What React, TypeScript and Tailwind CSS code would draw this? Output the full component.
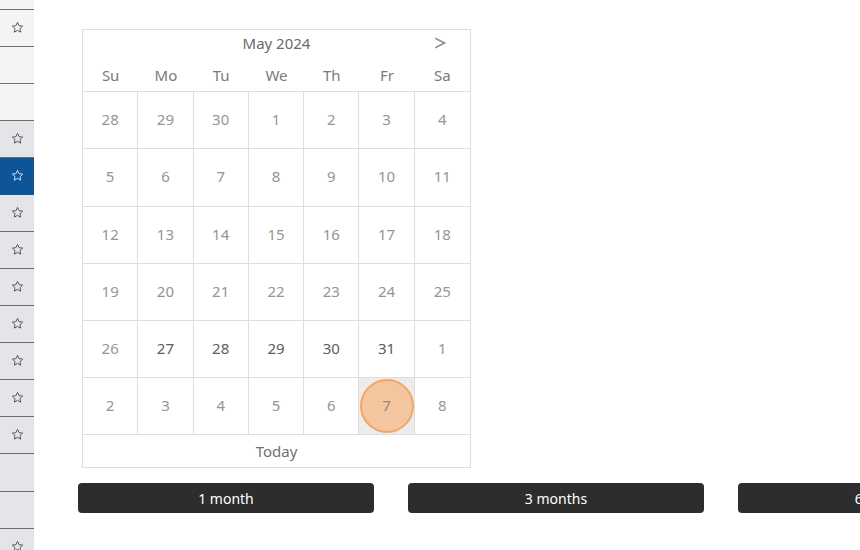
import React from "react";

const font = { fontFamily: '"Noto Sans", "Liberation Sans", sans-serif' };

function StarIcon({ color }: { color: string }) {
  return (
    <svg className="-mt-[2px]" width="13" height="13" viewBox="0 0 24 24" fill="none" stroke={color} strokeWidth="1.8" strokeLinejoin="round">
      <path d="M12 2.5l2.9 6.1 6.6.8-4.9 4.6 1.3 6.6L12 17.3l-5.9 3.3 1.3-6.6-4.9-4.6 6.6-.8z" />
    </svg>
  );
}

type Row = { h: string; star: boolean; kind: "light" | "gray" | "blue" };

const rows: Row[] = [
  { h: "h-[10px]", star: false, kind: "light" },
  { h: "h-[37px]", star: true, kind: "light" },
  { h: "h-[37px]", star: false, kind: "light" },
  { h: "h-[37px]", star: false, kind: "light" },
  { h: "h-[37px]", star: true, kind: "gray" },
  { h: "h-[37px]", star: true, kind: "blue" },
  { h: "h-[37px]", star: true, kind: "gray" },
  { h: "h-[37px]", star: true, kind: "gray" },
  { h: "h-[37px]", star: true, kind: "gray" },
  { h: "h-[37px]", star: true, kind: "gray" },
  { h: "h-[37px]", star: true, kind: "gray" },
  { h: "h-[37px]", star: true, kind: "gray" },
  { h: "h-[37px]", star: true, kind: "gray" },
  { h: "h-[38px]", star: false, kind: "gray" },
  { h: "h-[37px]", star: false, kind: "gray" },
  { h: "h-[37px]", star: true, kind: "gray" },
];

const weeks: { d: number; on?: boolean; today?: boolean }[][] = [
  [{ d: 28 }, { d: 29 }, { d: 30 }, { d: 1 }, { d: 2 }, { d: 3 }, { d: 4 }],
  [{ d: 5 }, { d: 6 }, { d: 7 }, { d: 8 }, { d: 9 }, { d: 10 }, { d: 11 }],
  [{ d: 12 }, { d: 13 }, { d: 14 }, { d: 15 }, { d: 16 }, { d: 17 }, { d: 18 }],
  [{ d: 19 }, { d: 20 }, { d: 21 }, { d: 22 }, { d: 23 }, { d: 24 }, { d: 25 }],
  [{ d: 26 }, { d: 27, on: true }, { d: 28, on: true }, { d: 29, on: true }, { d: 30, on: true }, { d: 31, on: true }, { d: 1 }],
  [{ d: 2 }, { d: 3 }, { d: 4 }, { d: 5 }, { d: 6 }, { d: 7, today: true }, { d: 8 }],
];

const rowH = ["h-[57px]", "h-[58px]", "h-[57px]", "h-[57px]", "h-[57px]", "h-[57px]"];

export default function App() {
  return (
    <div className="flex w-[860px] h-[550px] overflow-hidden bg-white" style={font}>
      <div className="w-[34px] shrink-0 flex flex-col">
        {rows.map((r, i) => (
          <div
            key={i}
            className={`${r.h} shrink-0 flex items-center justify-center border-b ${
              r.kind === "light"
                ? "bg-[#f4f4f4] border-[#6f6f6f]"
                : r.kind === "blue"
                ? "bg-[#0c5596] border-[#0c5596]"
                : "bg-[#e3e5e8] border-[#6f6f6f]"
            }`}
          >
            {r.star && <StarIcon color={r.kind === "blue" ? "#cfe3f7" : "#555"} />}
          </div>
        ))}
      </div>

      <div className="flex-1 min-w-0 pl-[44px] pt-[29px]">
        <div className="ml-[4px] w-[389px] border border-[#dedede] text-[#959595]">
          <div className="relative h-[30px] flex items-center justify-center text-[15px] text-[#6a6a6a]">
            <span className="-mt-[3px]">May 2024</span>
            <div className="absolute right-[23px] top-[6px]">
              <svg width="14" height="14" viewBox="0 0 14 14" fill="none" stroke="#8a8a8a" strokeWidth="1.3">
                <polyline points="2,2 12,7 2,12" />
                <polyline points="3,3.2 10.5,7 3,10.8" strokeWidth="0.8" />
              </svg>
            </div>
          </div>
          <div className="grid grid-cols-7 h-[32px] border-b border-[#dedede] text-[15px] text-[#7a7a7a]">
            {["Su", "Mo", "Tu", "We", "Th", "Fr", "Sa"].map((w) => (
              <div key={w} className="flex items-center justify-center -mt-[1px]">{w}</div>
            ))}
          </div>
          {weeks.map((wk, wi) => (
            <div key={wi} className={`grid grid-cols-7 ${rowH[wi]} border-b border-[#dedede]`}>
              {wk.map((c, ci) => (
                <div
                  key={ci}
                  className={`relative flex items-center justify-center text-[15px] ${ci < 6 ? "border-r border-[#dedede]" : ""} ${
                    c.today ? "bg-[#ececec]" : ""
                  } ${c.on ? "text-[#5c5c5c]" : "text-[#959595]"}`}
                >
                  {c.today && (
                    <div className="absolute left-1/2 top-1/2 -translate-x-1/2 -translate-y-1/2 w-[54px] h-[54px] rounded-full bg-[#f4c69f] border-2 border-[#f5a560]" />
                  )}
                  <span className={`relative -mt-[2px] ${c.today ? "text-[#9a8576]" : ""}`}>{c.d}</span>
                </div>
              ))}
            </div>
          ))}
          <div className="h-[32px] flex items-center justify-center text-[15px] text-[#707070]">Today</div>
        </div>

        <div className="flex gap-[34px] mt-[15px]">
          {["1 month", "3 months", "6 months"].map((t) => (
            <div
              key={t}
              className="w-[296px] h-[30px] shrink-0 rounded-[4px] bg-[#2d2d2d] text-white text-[14px] flex items-center justify-center"
            >
              {t}
            </div>
          ))}
        </div>
      </div>
    </div>
  );
}
